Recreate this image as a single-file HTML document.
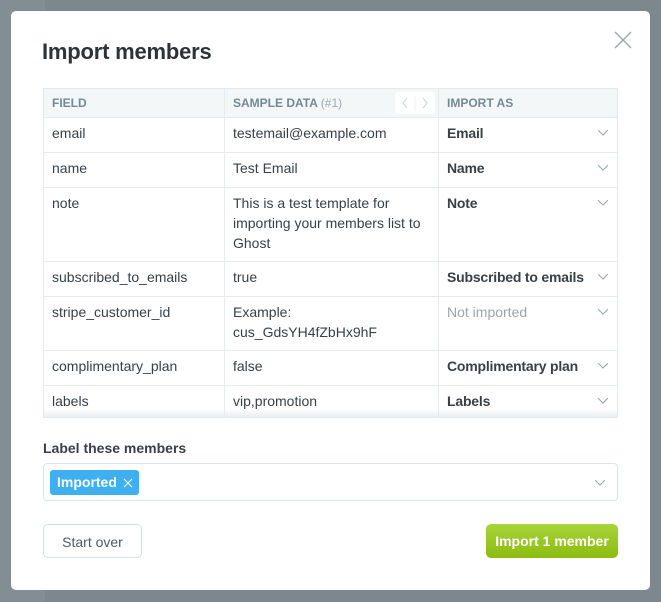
<!DOCTYPE html>
<html><head><style>
*{box-sizing:border-box;margin:0;padding:0}
body{width:661px;height:602px;background:#7d878e;font-family:"Liberation Sans",sans-serif;position:relative;overflow:hidden;color:#394047}
.bg1{position:absolute;left:0;top:0;width:45px;height:602px;background:#838d94}
.modal{position:absolute;left:11px;top:11px;width:639px;height:579px;background:#fff;border-radius:5px}
h1{position:absolute;left:31px;top:28px;font-size:22px;font-weight:bold;color:#2d3338;letter-spacing:-0.2px}
.close{position:absolute;left:603px;top:20px}
.tbl{position:absolute;left:32px;top:77px;width:575px;height:330px;border:1px solid #e3e9ed;overflow:hidden}
.row{position:absolute;left:0;width:575px;border-top:1px solid #e6ebee;font-size:14px}
.c{position:absolute;top:0;height:100%;padding:5px 8px;line-height:20px;white-space:nowrap}
.c1{left:0;width:180px}.c2{left:180px;width:214px;border-left:1px solid #e6ebee;white-space:normal}.c3{left:394px;width:181px;border-left:1px solid #e6ebee;font-weight:bold;letter-spacing:-0.2px}
.hd{top:0;height:28px;background:#f4f7f8;border-top:none;font-size:12px;color:#738a94;font-weight:bold}
.hd .c{padding:4px 8px;font-weight:bold}
.chev{position:absolute;right:11px;top:12px}
.lbl{position:absolute;left:32px;top:429px;font-size:14px;font-weight:bold;color:#394047}
.inp{position:absolute;left:32px;top:452px;width:575px;height:38px;border:1px solid #dde4e8;border-radius:4px}
.tag{position:absolute;left:6px;top:6px;height:25px;width:89px;background:#3eb0ef;border-radius:3px;color:#fff;font-size:14px;font-weight:bold;padding:4px 7px;white-space:nowrap}
.btn{position:absolute;top:513px;height:34px;border-radius:5px;font-size:14px;text-align:center;line-height:34px}
</style></head><body>
<div class="bg1"></div>
<div class="modal">
<h1>Import members</h1>
<svg class="close" width="18" height="18" viewBox="0 0 18 18"><path d="M1 1L17 17M17 1L1 17" stroke="#9aa5ab" stroke-width="1.3"/></svg>
<div class="tbl">
<div class="row hd"><div class="c c1">FIELD</div><div class="c c2">SAMPLE DATA <span style="font-weight:normal;color:#9aabb3">(#1)</span>
<div style="position:absolute;left:170px;top:3px;width:40px;height:22px;background:#fff;border-radius:3px"><svg width="40" height="22"><path d="M12 6L8 11L12 16M28 6L32 11L28 16" stroke="#c5cfd4" fill="none"/><path d="M20 3V19" stroke="#eef1f3"/></svg></div></div><div class="c c3" style="font-size:12px;color:#738a94;letter-spacing:0">IMPORT AS</div></div>
<div class="row" style="top:28px;height:35px"><div class="c c1">email</div><div class="c c2">testemail@example.com</div><div class="c c3">Email<svg class="chev" width="10" height="6"><path d="M0 0L5 5L10 0" stroke="#9aa5ab" fill="none"/></svg></div></div>
<div class="row" style="top:63px;height:35px"><div class="c c1">name</div><div class="c c2">Test Email</div><div class="c c3">Name<svg class="chev" width="10" height="6"><path d="M0 0L5 5L10 0" stroke="#9aa5ab" fill="none"/></svg></div></div>
<div class="row" style="top:98px;height:74px"><div class="c c1">note</div><div class="c c2">This is a test template for importing your members list to Ghost</div><div class="c c3">Note<svg class="chev" width="10" height="6"><path d="M0 0L5 5L10 0" stroke="#9aa5ab" fill="none"/></svg></div></div>
<div class="row" style="top:172px;height:35px"><div class="c c1">subscribed_to_emails</div><div class="c c2">true</div><div class="c c3">Subscribed to emails<svg class="chev" width="10" height="6"><path d="M0 0L5 5L10 0" stroke="#9aa5ab" fill="none"/></svg></div></div>
<div class="row" style="top:207px;height:54px"><div class="c c1">stripe_customer_id</div><div class="c c2">Example:<br>cus_GdsYH4fZbHx9hF</div><div class="c c3" style="font-weight:normal;color:#9aa5ab;letter-spacing:0">Not imported<svg class="chev" width="10" height="6"><path d="M0 0L5 5L10 0" stroke="#9aa5ab" fill="none"/></svg></div></div>
<div class="row" style="top:261px;height:35px"><div class="c c1">complimentary_plan</div><div class="c c2">false</div><div class="c c3">Complimentary plan<svg class="chev" width="10" height="6"><path d="M0 0L5 5L10 0" stroke="#9aa5ab" fill="none"/></svg></div></div>
<div class="row" style="top:296px;height:40px"><div class="c c1">labels</div><div class="c c2">vip,promotion</div><div class="c c3">Labels<svg class="chev" width="10" height="6"><path d="M0 0L5 5L10 0" stroke="#9aa5ab" fill="none"/></svg></div></div>
<div style="position:absolute;left:0;top:320px;width:575px;height:10px;background:linear-gradient(rgba(255,255,255,0),rgba(225,230,233,.9))"></div>
</div>
<div class="lbl">Label these members</div>
<div class="inp"><div class="tag">Imported<svg style="margin-left:6px;vertical-align:-1px" width="10" height="10"><path d="M1 1L9 9M9 1L1 9" stroke="#fff" stroke-width="1"/></svg></div>
<svg style="position:absolute;right:12px;top:16px" width="10" height="6"><path d="M0 0L5 5L10 0" stroke="#9aa5ab" fill="none"/></svg></div>
<div class="btn" style="left:32px;width:99px;border:1px solid #d5dfe4;color:#4c5a63">Start over</div>
<div class="btn" style="left:475px;width:132px;background:linear-gradient(#a7d43a,#8cbc10);color:#fff;font-weight:bold">Import 1 member</div>
</div>
</body></html>
